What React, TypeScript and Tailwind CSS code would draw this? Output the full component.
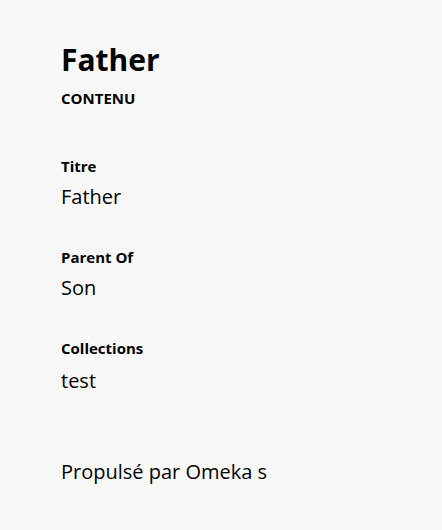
export default function App() {
  const fields = [
    { label: "Titre", value: "Father" },
    { label: "Parent Of", value: "Son" },
    { label: "Collections", value: "test" },
  ];

  return (
    <div
      className="min-h-[530px] bg-[#f8f8f8] px-[61px] pt-[40px] text-black"
      style={{ fontFamily: '"Open Sans", sans-serif' }}
    >
      <h1 className="text-[30px] font-bold leading-[40px]">Father</h1>
      <h2 className="mt-[8px] text-[15px] font-bold uppercase leading-[20px]">Contenu</h2>

      <dl className="mt-[48px] flex flex-col gap-[36px]">
        {fields.map((f, i) => (
          <div key={f.label} className={`flex flex-col ${i === 2 ? "gap-[9px]" : "gap-[7px]"}`}>
            <dt className="text-[15px] font-bold leading-[20px]">{f.label}</dt>
            <dd className="text-[20px] leading-[28px]">{f.value}</dd>
          </div>
        ))}
      </dl>

      <footer className="mt-[63px] text-[20px] leading-[28px]">Propulsé par Omeka s</footer>
    </div>
  );
}
